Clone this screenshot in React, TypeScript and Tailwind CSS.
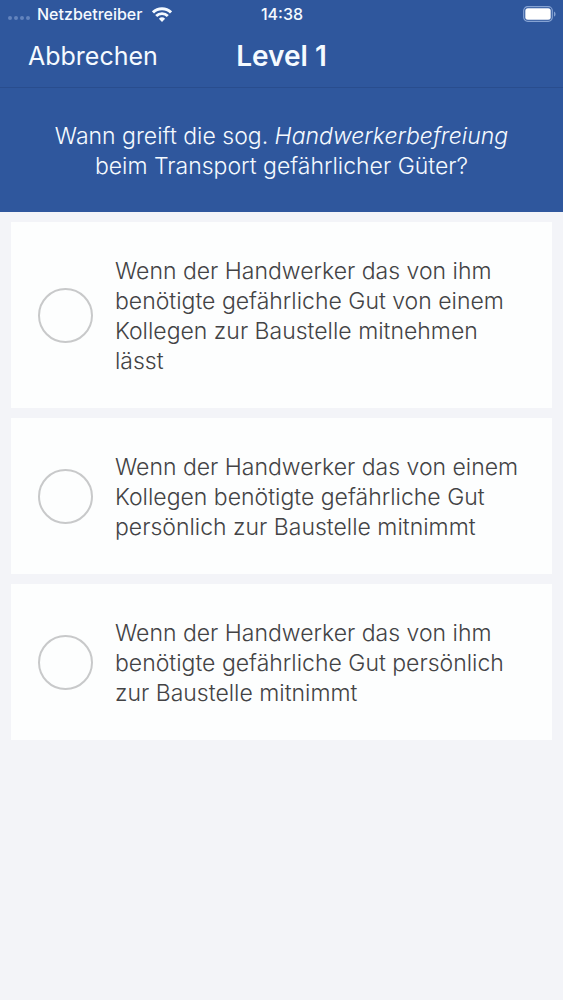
import { useState } from "react";

const answers = [
  "Wenn der Handwerker das von ihm benötigte gefährliche Gut von einem Kollegen zur Baustelle mitnehmen lässt",
  "Wenn der Handwerker das von einem Kollegen benötigte gefährliche Gut persönlich zur Baustelle mitnimmt",
  "Wenn der Handwerker das von ihm benötigte gefährliche Gut persönlich zur Baustelle mitnimmt",
];

function WifiIcon() {
  return (
    <svg viewBox="0 0 20 15" className="h-[15px] w-5" fill="none" stroke="currentColor" strokeWidth="2.9" aria-hidden="true">
      <path d="M1 5.4a12.8 12.8 0 0 1 18 0" />
      <path d="M4.2 9a8.2 8.2 0 0 1 11.6 0" />
      <path d="M10 15 6.9 11.8a4.5 4.5 0 0 1 6.2 0Z" fill="currentColor" stroke="none" />
    </svg>
  );
}

function BatteryIcon() {
  return (
    <svg viewBox="0 0 33 16" className="h-4 w-[33px]" aria-hidden="true">
      <rect x="0.7" y="0.7" width="28.6" height="14.6" rx="4" fill="none" stroke="#86a3d3" strokeWidth="1.2" />
      <rect x="2.3" y="2.3" width="25.4" height="11.4" rx="2.5" fill="#fff" />
      <path d="M31 5.4c2 .8 2 4.4 0 5.2Z" fill="#86a3d3" />
    </svg>
  );
}

function StatusBar() {
  return (
    <div className="grid h-7 grid-cols-[1fr_auto_1fr] items-center pr-[7px] pl-2 text-base leading-7">
      <div className="flex items-center">
        <span className="mr-[7px] flex gap-[2px] pt-2" aria-hidden="true">
          <i className="size-1 rounded-full bg-[#6384bd]" />
          <i className="size-1 rounded-full bg-[#6384bd]" />
          <i className="size-1 rounded-full bg-[#6384bd]" />
          <i className="size-1 rounded-full bg-[#6384bd]" />
        </span>
        <span className="mr-[10px] font-medium">Netzbetreiber</span>
        <WifiIcon />
      </div>
      <span className="font-medium">14:38</span>
      <div className="flex justify-end">
        <BatteryIcon />
      </div>
    </div>
  );
}

export default function App() {
  const [selected, setSelected] = useState<number | null>(null);

  return (
    <div className="min-h-screen bg-[#f3f4f8] font-['Inter','Liberation_Sans',sans-serif] text-[#434345]">
      <header className="bg-[#2f579d] text-[#f5faff]">
        <StatusBar />
        <nav className="grid h-[60px] grid-cols-[1fr_auto_1fr] items-center border-b border-[#294d8e] px-7 pb-1">
          <button type="button" className="justify-self-start text-[25px] leading-8">
            Abbrechen
          </button>
          <h1 className="text-[28px] leading-8 font-semibold">Level 1</h1>
        </nav>
        <p id="question" className="px-8 pt-[33px] pb-[31px] text-center text-[23px] leading-[30px] font-light">
          Wann greift die sog. <em>Handwerkerbefreiung</em>
          <br />
          beim Transport gefährlicher Güter?
        </p>
      </header>
      <main role="radiogroup" aria-labelledby="question" className="flex flex-col gap-[10px] px-[11px] py-[10px]">
        {answers.map((answer, index) => (
          <label key={answer} className="flex cursor-pointer items-center gap-[22px] bg-[#fdfefe] py-8 pr-6 pl-[27px]">
            <input
              type="radio"
              name="answer"
              checked={selected === index}
              onChange={() => setSelected(index)}
              className="size-[55px] shrink-0 appearance-none rounded-full border-2 border-[#c8c9ca] checked:border-[#2f579d] checked:bg-[#2f579d]"
            />
            <span className="pt-[2px] text-[23px] leading-[30px] font-light">{answer}</span>
          </label>
        ))}
      </main>
    </div>
  );
}
